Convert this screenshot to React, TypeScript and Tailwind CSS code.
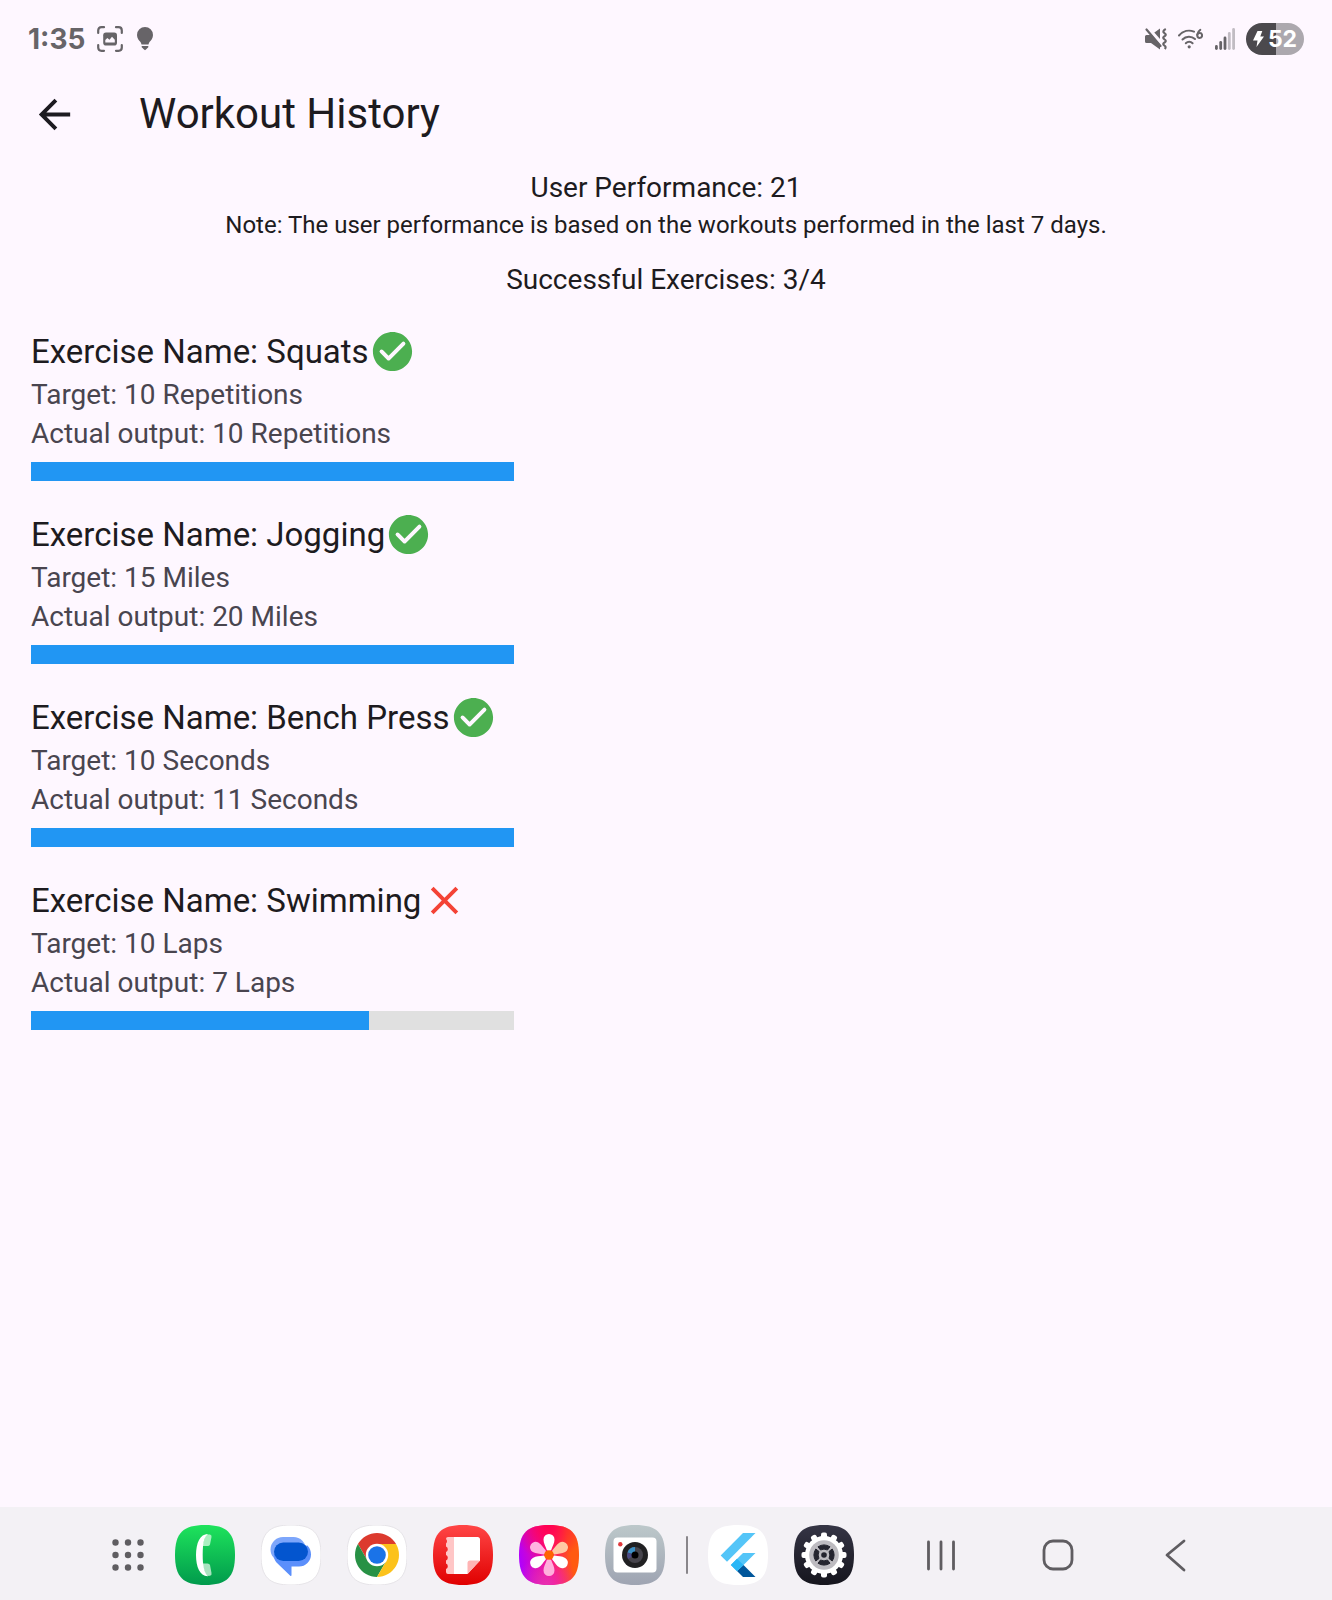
import type { ReactNode } from "react";

type Exercise = { name: string; unit: string; target: number; actual: number };

const exercises: Exercise[] = [
  { name: "Squats", unit: "Repetitions", target: 10, actual: 10 },
  { name: "Jogging", unit: "Miles", target: 15, actual: 20 },
  { name: "Bench Press", unit: "Seconds", target: 10, actual: 11 },
  { name: "Swimming", unit: "Laps", target: 10, actual: 7 },
];

const SQUIRCLE = "M30 0C52 0 60 8 60 30C60 52 52 60 30 60C8 60 0 52 0 30C0 8 8 0 30 0Z";

function StatusBar() {
  return (
    <div className="flex h-[78px] items-center justify-between px-7 text-[#676468]">
      <div className="flex items-center">
        <span className="font-[Inter,sans-serif] text-[28px] font-bold leading-none">1:35</span>
        <svg className="ml-3 size-[26px]" viewBox="0 0 26 26" fill="none" aria-hidden="true">
          <path
            d="M1.200 7V4.500Q1.200 1.200 4.500 1.200H7M19 1.200h2.500Q24.800 1.200 24.800 4.500V7M24.800 19v2.500Q24.800 24.800 21.500 24.800H19M7 24.800H4.500Q1.200 24.800 1.200 21.500V19"
            stroke="currentColor"
            strokeWidth="2.200"
            strokeLinecap="round"
          />
          <rect x="6.200" y="6.500" width="13.800" height="13" rx="2.800" fill="currentColor" />
          <path d="M8.300 16.500v-2.500l2-2 2.200 1.800 2.500-3 2.800 3v2.700z" fill="#fef7ff" />
        </svg>
        <svg className="ml-3.5 h-6 w-4" viewBox="0 0 16 24" fill="currentColor" aria-hidden="true">
          <path d="M8 0a8 8 0 0 1 8 8c0 3.500-2 5.200-3.500 7-.6.8-.7 1.500-1 2.500h-7c-.3-1-.4-1.700-1-2.500C2 13.200 0 11.500 0 8a8 8 0 0 1 8-8zM4.700 19h6.600v1.200L9.500 22 8 23.300 6.500 22l-1.800-1.800z" />
        </svg>
      </div>
      <div className="flex items-center">
        <svg className="h-[22px] w-[22px]" viewBox="0 0 22 22" aria-hidden="true">
          <path d="M1.500 7H6l9-6.500v21L6 15H1.500Q0 15 0 13.500v-5Q0 7 1.500 7z" fill="currentColor" />
          <path d="M2.500-.5l15 17" stroke="#fef7ff" strokeWidth="3.500" />
          <path d="M1.500 1.500l14 16.500" stroke="currentColor" strokeWidth="2.200" strokeLinecap="round" />
          <path d="M20.800 1c-3 1.500-3 3 -1.300 4.200 1.700 1 1.700 2 0 3.100-1.700 1-1.700 2 0 3.100 1.700 1 1.700 2 0 3.100-1.700 1-1.700 2 0 3.100 1.300.8 1.500 2 .3 3.400" stroke="currentColor" strokeWidth="2.200" fill="none" />
        </svg>
        <svg className="ml-[11px] h-[22px] w-[25px]" viewBox="0 0 25 22" aria-hidden="true">
          <g fill="none" stroke="currentColor" strokeWidth="2" strokeLinecap="round">
            <path d="M1 7.500C5 2.800 11 1.600 16 3.600" />
            <path d="M4.500 11.500C8 7.800 13.500 7.800 17 11" />
            <path d="M7.800 15.300c2-2 4.800-2 6.800 0" />
            <path d="M22.300 1.800c-1.800 1.200-2.900 3-3.100 5" />
            <circle cx="21.700" cy="7.500" r="2.400" />
          </g>
          <circle cx="11.200" cy="18.800" r="1.600" fill="currentColor" />
        </svg>
        <svg className="ml-3 h-[22px] w-5" viewBox="0 0 20 22" fill="currentColor" aria-hidden="true">
          <rect x="0" y="17" width="2.800" height="5" rx="1.400" />
          <rect x="4.300" y="13" width="2.800" height="9" rx="1.400" />
          <rect x="8.600" y="8.500" width="2.800" height="13.500" rx="1.400" />
          <rect x="12.900" y="4" width="2.800" height="18" rx="1.400" opacity=".4" />
          <rect x="17.200" y="0" width="2.800" height="22" rx="1.400" opacity=".4" />
        </svg>
        <div className="ml-[11px] flex h-8 w-[58px] items-center justify-center gap-1 rounded-full bg-linear-to-r from-[#4b494d] from-52% to-[#aca8ae] to-52% text-white">
          <svg className="h-4 w-[11px]" viewBox="0 0 11 16" fill="currentColor" aria-hidden="true">
            <path d="M4.500 0h4.800L7.300 5.500H11L3.500 16l1-6.500H0z" />
          </svg>
          <span className="font-[Inter,sans-serif] text-[23px] font-bold leading-none">52</span>
        </div>
      </div>
    </div>
  );
}

function AppBar() {
  return (
    <header className="flex h-[72px] items-center pl-[31px] text-[#1d1b20]">
      <button type="button" aria-label="Back" className="size-[47px]">
        <svg className="size-full" viewBox="0 0 24 24" fill="currentColor" aria-hidden="true">
          <path d="M20 11H7.830l5.590-5.590L12 4l-8 8 8 8 1.410-1.410L7.830 13H20v-2z" />
        </svg>
      </button>
      <h1 className="ml-[61px] text-[42px] leading-none">Workout History</h1>
    </header>
  );
}

function ResultIcon({ done }: { done: boolean }) {
  return done ? (
    <svg className="size-[47px] text-[#4caf50]" viewBox="0 0 24 24" fill="currentColor" role="img" aria-label="Completed">
      <path d="M12 2C6.480 2 2 6.480 2 12s4.480 10 10 10 10-4.480 10-10S17.520 2 12 2zM9.290 16.290 5.700 12.700a.996.996 0 1 1 1.410-1.410L10 14.170l6.880-6.880a.996.996 0 1 1 1.410 1.410l-7.590 7.590a.996.996 0 0 1-1.410 0z" />
    </svg>
  ) : (
    <svg className="size-[47px] text-[#f44336]" viewBox="0 0 24 24" fill="currentColor" role="img" aria-label="Not completed">
      <path d="M19 6.410 17.590 5 12 10.590 6.410 5 5 6.410 10.590 12 5 17.590 6.410 19 12 13.410 17.590 19 19 17.590 13.410 12z" />
    </svg>
  );
}

function ExerciseItem({ name, unit, target, actual }: Exercise) {
  const percent = Math.min(100, (actual / target) * 100);
  return (
    <li>
      <div className="flex items-center">
        <h2 className="text-[33px] leading-[47px] text-[#1d1b20]">Exercise Name: {name}</h2>
        <ResultIcon done={actual >= target} />
      </div>
      <div className="text-[28px] leading-[39px] text-[#49454f]">
        <p>Target: {target} {unit}</p>
        <p>Actual output: {actual} {unit}</p>
      </div>
      <div
        role="progressbar"
        aria-label={name}
        aria-valuenow={percent}
        className="mt-[9px] h-[19px] w-[38%] bg-[#e0e0e0]"
      >
        <div className="h-full bg-[#2196f3]" style={{ width: `${percent}%` }} />
      </div>
    </li>
  );
}

function AppIcon({ label, children }: { label: string; children: ReactNode }) {
  return (
    <button type="button" aria-label={label} className="size-[60px] shrink-0">
      <svg className="size-full" viewBox="0 0 60 60" aria-hidden="true">
        {children}
      </svg>
    </button>
  );
}

function VerticalGradient({ id, from, to }: { id: string; from: string; to: string }) {
  return (
    <defs>
      <linearGradient id={id} x1="0" y1="0" x2="0" y2="1">
        <stop offset="0" stopColor={from} />
        <stop offset="1" stopColor={to} />
      </linearGradient>
    </defs>
  );
}

const PETAL = "M27.800 25C26.500 21 24.500 18.500 24.500 14.500A5.500 5.500 0 0 1 35.500 14.500C35.500 18.500 33.500 21 32.200 25Q30 27.500 27.800 25Z";
const petals = [
  { angle: 60, color: "#ffc9a3" },
  { angle: 180, color: "#ffb0dc" },
  { angle: 300, color: "#ffb3e0" },
  { angle: 0, color: "#ffffff" },
  { angle: 120, color: "#ffffff" },
  { angle: 240, color: "#ffffff" },
];
const teeth = [0, 30, 60, 90, 120, 150, 180, 210, 240, 270, 300, 330];

function Taskbar() {
  return (
    <nav aria-label="Taskbar" className="flex h-[93px] items-center justify-center bg-[#f3f1f5] pt-0.5 pr-[29px] text-[#5f5d61]">
      <AppIcon label="All apps">
        <g fill="currentColor">
          {[17.5, 30, 42.5].map((y) => [17.5, 30, 42.5].map((x) => <circle key={`${x}-${y}`} cx={x} cy={y} r="3.200" />))}
        </g>
      </AppIcon>
      <div className="ml-[17px] flex gap-[26px]">
        <AppIcon label="Phone">
          <VerticalGradient id="phone" from="#1ee35c" to="#009a4c" />
          <path d={SQUIRCLE} fill="url(#phone)" />
          <path d="M31 9.500L35 9.500Q37 10 36.500 12L35 19.500Q34.500 21 32.500 21H27z" fill="#a9f0c0" />
          <path d="M27 38.500H32.500Q34.500 38.500 35 40L36.500 48Q37 50.500 35 50.800L31 51z" fill="#a9e3c0" />
          <path d="M33 9C25 9 21 18 21 30S25 51.500 33 51.200C30.500 50 28.500 43 28 37.500C27.600 33 27.600 26.500 28 21.500C28.500 16 30 11 33 9Z" fill="#fff" />
        </AppIcon>
        <AppIcon label="Messages">
          <path d={SQUIRCLE} fill="#fff" stroke="#e6e4e8" strokeWidth="1" />
          <rect x="9.500" y="12" width="35.500" height="25" rx="12.500" fill="#7da6fb" />
          <path d="M46.500 20.500Q50 24.500 50 29.500A12 12 0 0 1 38 41.500H30.500V50Q30.500 51.800 29 50.500L15.500 37.500Q12.500 34 13 29Z" fill="#5b8ffb" />
          <rect x="13" y="17.500" width="34" height="18.500" rx="9.250" fill="#0355cf" />
        </AppIcon>
        <AppIcon label="Chrome">
          <path d={SQUIRCLE} fill="#fff" stroke="#e6e4e8" strokeWidth="1" />
          <path d="M30 30L20.470 35.500 10.950 19A22 22 0 0 1 49.050 19H30Z" fill="#dc3a2e" />
          <path d="M30 30L39.530 35.500 30 52A22 22 0 0 1 10.950 19L20.470 35.500Z" fill="#289145" />
          <path d="M30 30V19H49.050A22 22 0 0 1 30 52L39.530 35.500Z" fill="#fcc21b" />
          <circle cx="30" cy="30" r="11.200" fill="#fff" />
          <circle cx="30" cy="30" r="8.800" fill="#1a73e8" />
        </AppIcon>
        <AppIcon label="Notes">
          <VerticalGradient id="notes" from="#ff4646" to="#e00000" />
          <path d={SQUIRCLE} fill="url(#notes)" />
          <path d="M15 12H21V49H15Q13 49 13 47V44A3 3 0 0 0 13 38.500V35.500A3 3 0 0 0 13 30V27A3 3 0 0 0 13 21.500V18.500A3 3 0 0 0 13 14Q13 12 15 12Z" fill="#ffc6c6" />
          <path d="M21 12H44.500Q47 12 47 14.500V35.500L34.500 49H21Z" fill="#fff" />
          <path d="M47 35.500L34.500 49V38Q34.500 35.500 37 35.500Z" fill="#ffb4b4" />
        </AppIcon>
        <AppIcon label="Gallery">
          <defs>
            <linearGradient id="gallery" x1="0" y1=".6" x2="1" y2=".4">
              <stop offset="0" stopColor="#b000ff" />
              <stop offset=".5" stopColor="#ff1080" />
              <stop offset=".85" stopColor="#ff5a10" />
            </linearGradient>
            <radialGradient id="gallery-top" cx=".5" cy="0" r=".6">
              <stop offset="0" stopColor="#ff0050" />
              <stop offset="1" stopColor="#ff0050" stopOpacity="0" />
            </radialGradient>
            <radialGradient id="gallery-bottom" cx=".45" cy="1" r=".5">
              <stop offset="0" stopColor="#e830b0" />
              <stop offset="1" stopColor="#e830b0" stopOpacity="0" />
            </radialGradient>
          </defs>
          <path d={SQUIRCLE} fill="url(#gallery)" />
          <path d={SQUIRCLE} fill="url(#gallery-top)" />
          <path d={SQUIRCLE} fill="url(#gallery-bottom)" />
          {petals.map((p) => (
            <path key={p.angle} d={PETAL} fill={p.color} transform={`rotate(${p.angle} 30 30)`} />
          ))}
          <circle cx="30" cy="30" r="4.800" fill="#ff6400" />
        </AppIcon>
        <AppIcon label="Camera">
          <VerticalGradient id="camera" from="#bcc8ca" to="#9ea4b2" />
          <path d={SQUIRCLE} fill="url(#camera)" />
          <rect x="8.500" y="12.500" width="43" height="35" rx="4" fill="#fff" />
          <circle cx="15.300" cy="19.200" r="2.200" fill="#e0393c" />
          <circle cx="30" cy="30" r="13" fill="#202022" />
          <circle cx="30" cy="30" r="8" fill="#46444c" />
          <path d="M30 30L22.500 27.500A8 8 0 0 1 30 22Z" fill="#3c8fc4" />
          <path d="M30 30L22.500 27.500A8 8 0 0 0 23 34Z" fill="#4b4a86" />
          <circle cx="30" cy="30" r="3.500" fill="#000" />
        </AppIcon>
      </div>
      <div className="ml-[21px] h-[38px] w-0.5 rounded-full bg-[#88868a]" />
      <div className="ml-5 flex gap-[26px]">
        <AppIcon label="Flutter">
          <path d={SQUIRCLE} fill="#fff" />
          <path d="M35 8H47.500L19 36.800 12.700 30.500Z" fill="#54c5f8" />
          <path d="M35 28H47.500L35.500 40 29 46 22.800 40Z" fill="#54c5f8" />
          <path d="M29 46L35.500 40 47.500 52H35Z" fill="#01579b" />
          <path d="M22.800 40L29 33.800 35.500 40 29 46.200Z" fill="#29b6f6" />
        </AppIcon>
        <AppIcon label="Settings">
          <VerticalGradient id="settings" from="#353545" to="#15151d" />
          <path d={SQUIRCLE} fill="url(#settings)" />
          {teeth.map((a) => (
            <rect key={a} x="27" y="7.500" width="6" height="8" rx="2" fill="#fff" transform={`rotate(${a} 30 30)`} />
          ))}
          <circle cx="30" cy="30" r="19" fill="#fff" />
          <circle cx="30" cy="30" r="14.800" fill="#bdbbc0" />
          <circle cx="30" cy="30" r="2.800" fill="#24242e" />
          {[0, 90, 180, 270].map((a) => (
            <path key={a} d="M24 21.800Q30 18 36 21.800L33.500 25Q30 23.200 26.500 25Z" fill="#24242e" stroke="#24242e" strokeWidth="1" strokeLinejoin="round" transform={`rotate(${a} 30 30)`} />
          ))}
        </AppIcon>
      </div>
      <div className="ml-[57px] flex gap-[57px]">
        <AppIcon label="Recent apps">
          <path d="M17.500 17V44M30 17V44M42.500 17V44" stroke="currentColor" strokeWidth="2.800" strokeLinecap="round" />
        </AppIcon>
        <AppIcon label="Home">
          <rect x="16" y="16" width="28" height="28" rx="9" fill="none" stroke="currentColor" strokeWidth="2.800" />
        </AppIcon>
        <AppIcon label="Go back">
          <path d="M39 16L22 30 39 45" fill="none" stroke="currentColor" strokeWidth="2.800" strokeLinecap="round" strokeLinejoin="round" />
        </AppIcon>
      </div>
    </nav>
  );
}

export default function App() {
  const successful = exercises.filter((e) => e.actual >= e.target).length;
  return (
    <div className="flex min-h-screen flex-col bg-[#fef7ff] font-[Roboto,sans-serif]">
      <StatusBar />
      <AppBar />
      <main className="grow px-[31px] pt-[18px]">
        <section className="text-center text-[28px] leading-[39px] text-[#1d1b20]">
          <p>User Performance: 21</p>
          <p className="text-[24px] leading-[37px]">
            Note: The user performance is based on the workouts performed in the last 7 days.
          </p>
          <p className="mt-4">Successful Exercises: {successful}/{exercises.length}</p>
        </section>
        <ul className="mt-[29px] flex flex-col gap-[30px]">
          {exercises.map((e) => (
            <ExerciseItem key={e.name} {...e} />
          ))}
        </ul>
      </main>
      <Taskbar />
    </div>
  );
}
